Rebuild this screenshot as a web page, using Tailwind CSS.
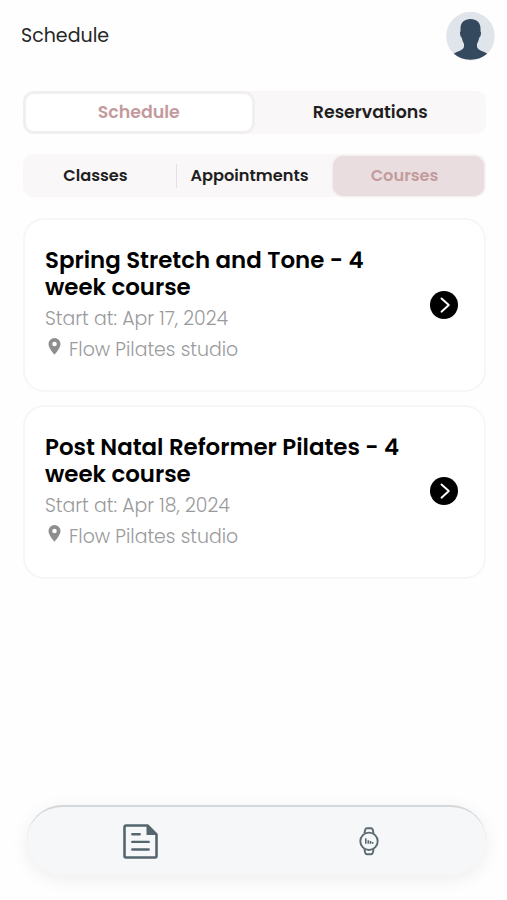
<!DOCTYPE html>
<html lang="en">
<head>
  <meta charset="UTF-8" />
  <meta name="viewport" content="width=device-width, initial-scale=1" />
  <title>Schedule</title>
  <script src="https://cdn.jsdelivr.net/npm/@tailwindcss/browser@4"></script>
</head>
<body class="bg-[#fefefe] font-['Poppins','Inter',sans-serif] whitespace-nowrap">
  <div class="w-[507px] h-[900px] flex flex-col pl-[23px] pr-[21px] overflow-hidden">
    <header class="h-[91px] shrink-0 flex justify-between items-start -ml-0.5 -mr-[9px] pt-3">
      <h1 class="text-[19px] leading-[47px] text-[#262626]">Schedule</h1>
      <svg class="size-[49px]" viewBox="0 0 49 49">
        <circle cx="24.5" cy="24.1" r="24.3" fill="#e0e5eb" />
        <path fill="#34495e" d="M24.5 7c-6 0-10 3.600-10 9.200v3.200c-.7.2-.6 1.800-.3 3.400.3 1.600.9 2.500 1.500 2.700.5 2.600 1.300 4.600 2.300 6.300v2.700c0 2.300-2.500 3.700-5.800 5-2.200.8-3.700 1.500-4.300 2.300 4.300 3.900 10.100 6 16.600 6s12.300-2.100 16.600-6c-.6-.8-2.100-1.500-4.300-2.300-3.300-1.300-5.800-2.700-5.800-5v-2.700c1-1.700 1.800-3.700 2.300-6.300.6-.2 1.200-1.100 1.500-2.700.3-1.600.4-3.200-.3-3.400v-3.200c0-5.600-4-9.200-10-9.200z" />
      </svg>
    </header>

    <div class="h-[43px] shrink-0 grid grid-cols-2 rounded-[10px] bg-[#faf7f8] text-[17.4px] font-semibold leading-[37px] text-center">
      <button class="rounded-[11px] bg-white border-[3px] border-[#f1eff0] text-[#c39b9d]">Schedule</button>
      <button class="text-[#1f1f1f]">Reservations</button>
    </div>

    <div class="h-[43px] shrink-0 mt-5 flex items-center rounded-[10px] bg-[#faf7f8] text-[16.2px] font-semibold text-center text-[#1f1f1f]">
      <button class="w-[153px] pr-2 pt-0.5">Classes</button>
      <span class="w-px h-6 bg-[#e4e1e2]"></span>
      <button class="w-[156px] pr-[11px] pt-0.5">Appointments</button>
      <button class="w-[151px] h-10 rounded-[10px] bg-[#e9dddf] text-[#c39b9d] pr-2 pt-0.5 shadow-[0_0_3px_#e9dddf]">Courses</button>
    </div>

    <article class="h-[174px] shrink-0 mt-[21px] flex justify-between rounded-[21px] border-2 border-[#f5f6f7] bg-white pl-5 pr-[26px] pt-[27px]">
      <div>
        <h2 class="text-[22.9px] font-semibold leading-[27px] text-black"><span class="block h-[27px]">Spring Stretch and Tone - 4</span><span class="block h-[27px]">week course</span></h2>
        <p class="mt-1 text-[18.9px] font-light leading-[28px] text-[#999a9c]">Start at: Apr 17, 2024</p>
        <p class="mt-[3px] flex text-[18.9px] font-light leading-[28px] text-[#999a9c]">
          <svg class="w-[14px] h-[17px] mr-[7px] ml-[3px] mt-0.5" viewBox="0 0 14 17"><path fill="#8e8e8f" fill-rule="evenodd" d="M6.500 0a6 6 0 0 0-6 6c0 4.200 6 10.700 6 10.700s6-6.500 6-10.700a6 6 0 0 0-6-6zm0 3.700a2.300 2.300 0 1 1 0 4.600 2.300 2.300 0 0 1 0-4.600z" /></svg>
          <span>Flow Pilates studio</span>
        </p>
      </div>
      <svg class="size-7 mt-[44px]" viewBox="0 0 28 28"><circle cx="14" cy="14" r="14" /><path d="M11.500 7.500 18.800 14l-7.300 6.700" fill="none" stroke="#fff" stroke-width="1.900" stroke-linecap="round" stroke-linejoin="round" /></svg>
    </article>

    <article class="h-[174px] shrink-0 mt-[13px] flex justify-between rounded-[21px] border-2 border-[#f5f6f7] bg-white pl-5 pr-[26px] pt-[27px]">
      <div>
        <h2 class="text-[22.9px] font-semibold leading-[27px] text-black"><span class="block h-[27px]">Post Natal Reformer Pilates - 4</span><span class="block h-[27px]">week course</span></h2>
        <p class="mt-1 text-[18.9px] font-light leading-[28px] text-[#999a9c]">Start at: Apr 18, 2024</p>
        <p class="mt-[3px] flex text-[18.9px] font-light leading-[28px] text-[#999a9c]">
          <svg class="w-[14px] h-[17px] mr-[7px] ml-[3px] mt-0.5" viewBox="0 0 14 17"><path fill="#8e8e8f" fill-rule="evenodd" d="M6.500 0a6 6 0 0 0-6 6c0 4.200 6 10.700 6 10.700s6-6.500 6-10.700a6 6 0 0 0-6-6zm0 3.700a2.300 2.300 0 1 1 0 4.600 2.300 2.300 0 0 1 0-4.600z" /></svg>
          <span>Flow Pilates studio</span>
        </p>
      </div>
      <svg class="size-7 mt-[43px]" viewBox="0 0 28 28"><circle cx="14" cy="14" r="14" /><path d="M11.500 7.500 18.800 14l-7.300 6.700" fill="none" stroke="#fff" stroke-width="1.900" stroke-linecap="round" stroke-linejoin="round" /></svg>
    </article>

    <nav class="h-[70px] shrink-0 mt-auto mb-[25px] ml-1 flex items-center rounded-[35px] bg-[#f5f7f9] border-t-2 border-[#d5d8da] shadow-[0_4px_18px_rgba(0,0,0,0.07)]">
      <a class="w-1/2 flex justify-center pr-0.5">
        <svg class="size-[35px]" viewBox="0 0 35 35">
          <path d="M3 1.500h21.500L33.500 10.500V32a1.500 1.500 0 0 1-1.500 1.500H3A1.500 1.500 0 0 1 1.500 32V3A1.500 1.500 0 0 1 3 1.500z" fill="none" stroke="#56666f" stroke-width="2.600" stroke-linejoin="round" />
          <path d="M23.500 1.500 33.500 11H23.500z" fill="#56666f" />
          <path d="M9.300 10.300h7.400M9.300 17.900h16.400M9.300 25.500h16.400" stroke="#56666f" stroke-width="2.400" stroke-linecap="round" />
        </svg>
      </a>
      <a class="w-1/2 flex justify-center pr-[5px]">
        <svg class="w-[20px] h-[29px]" viewBox="0 0 20 29" fill="none" stroke="#5c6b72" stroke-width="1.900">
          <circle cx="10" cy="14.300" r="8.700" />
          <path d="M5.400 6.500 6.200 2.800Q6.600 1.300 8 1.300h4q1.400 0 1.800 1.500l.8 3.700M5.400 22.100l.8 3.700q.4 1.500 1.800 1.500h4q1.400 0 1.800-1.500l.8-3.700" />
          <path d="M6.800 11.300v5.500M9.300 13.200v3.600M11.500 14v2.800M13.600 15v1.800" stroke-width="1.600" />
        </svg>
      </a>
    </nav>
  </div>
</body>
</html>
